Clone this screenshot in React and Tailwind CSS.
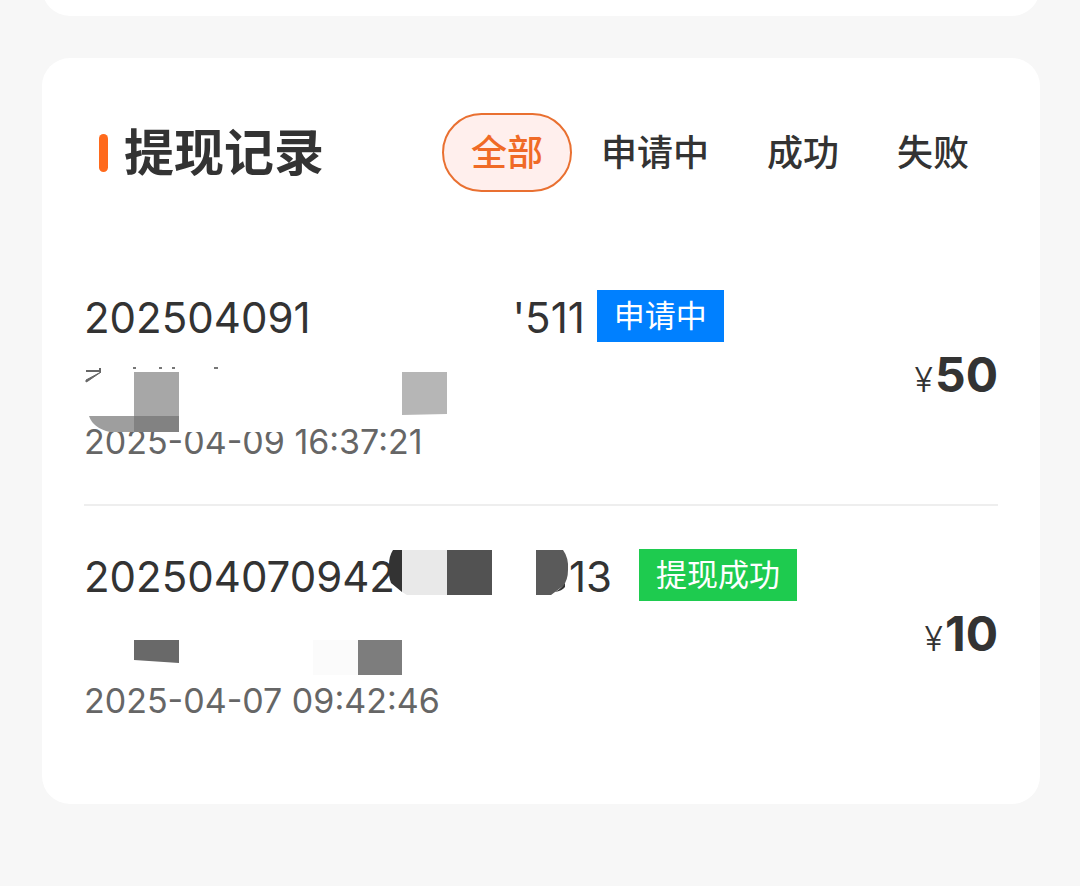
import { useState } from "react";

const TABS = ["全部", "申请中", "成功", "失败"];

const RECORDS = [
  {
    head: "202504091",
    tail: "'511",
    gapClass: "w-[202px]",
    badgeGap: "ml-[12px]",
    status: "申请中",
    badge: "bg-[#0080ff]",
    time: "2025-04-09 16:37:21",
    amount: "50",
    mask: (
      <svg className="absolute left-0 top-0 h-[180px] w-[380px]" viewBox="0 0 380 180" aria-hidden="true">
        <path d="M28 138H205V142H28Z" fill="#fff" />
        <path d="M2 81H17M16 78V82" stroke="#666" strokeWidth="2" fill="none" />
        <path d="M2 90L17 82L4 91L2 92Z" fill="#666" stroke="#666" />
        <path d="M49 78h3M75 78h3M88 78h3M130 78h4" stroke="#777" strokeWidth="2" />
        <path d="M50 82H95V127H50Z" fill="#a7a7a7" />
        <path d="M5 126H50V142H26Q9 138 5 126Z" fill="#9e9e9e" />
        <path d="M50 126H95V142H50Z" fill="#828282" />
        <path d="M318 82H363V124L318 125Z" fill="#b6b6b6" />
      </svg>
    ),
  },
  {
    head: "202504070942",
    tail: "13",
    gapClass: "w-[174px]",
    badgeGap: "ml-[27px]",
    status: "提现成功",
    badge: "bg-[#1ecb4f]",
    time: "2025-04-07 09:42:46",
    amount: "10",
    mask: (
      <svg className="absolute left-0 top-0 h-[180px] w-[500px]" viewBox="0 0 500 180" aria-hidden="true">
        <path d="M309 1H318V43L307 34Q304 26 305 16Q305 7 309 1Z" fill="#333" />
        <path d="M318 1H363V46H323L318 43Z" fill="#e9e9e9" />
        <path d="M363 1H408V46H363Z" fill="#525252" />
        <path d="M452 1H479Q485 9 484 21Q484 31 479 37L467 46H452Z" fill="#5a5a5a" />
        <path d="M471 43Q477 40 481 34V38Q478 42 471 43Z" fill="#333" />
        <path d="M50 91H95V114L50 111Z" fill="#696969" />
        <path d="M229 91H274V126H229Z" fill="#fbfbfb" />
        <path d="M274 91H318V126H274Z" fill="#7d7d7d" />
      </svg>
    ),
  },
];

function Record({ record }) {
  return (
    <li className="flex items-center justify-between border-b-2 border-[#eeeeee] pb-[37px] pt-[43px] last:border-b-0">
      <div className="relative">
        <div className="flex h-[52px] items-center text-[42px] leading-[52px] text-[#333]">
          <span className="pt-[4px]">{record.head}</span>
          <span className={record.gapClass} />
          <span className="pt-[4px]">{record.tail}</span>
          <span
            className={`${record.badgeGap} ${record.badge} px-[17px] text-[31px] leading-[52px] text-white`}
          >
            {record.status}
          </span>
        </div>
        <div className="h-[75px]" />
        <time className="block text-[34px] leading-[50px] text-[#666]">{record.time}</time>
        {record.mask}
      </div>
      <p className="flex items-baseline gap-[2px] pb-[8px] text-[#333]">
        <span className="text-[34px] font-light">¥</span>
        <strong className="text-[48px] font-bold leading-[60px]">{record.amount}</strong>
      </p>
    </li>
  );
}

export default function App() {
  const [active, setActive] = useState(0);
  return (
    <div className="flow-root min-h-screen bg-[#f7f7f7] pl-[42px] pr-[40px] font-['Inter','Noto_Sans_CJK_SC',sans-serif]">
      <div className="-mt-[40px] h-[56px] rounded-b-[28px] bg-white" />
      <main className="mt-[42px] rounded-[28px] bg-white px-[42px] pb-[41px] pt-[55px]">
        <header className="flex items-center justify-between">
          <h1 className="flex items-center gap-[16px] pl-[15px] text-[50px] font-bold leading-[60px] text-[#333]">
            <span className="h-[38px] w-[9px] rounded-full bg-[#ff6a1c]" />
            提现记录
          </h1>
          <nav className="flex">
            {TABS.map((tab, i) => (
              <button
                key={tab}
                type="button"
                aria-pressed={active === i}
                onClick={() => setActive(i)}
                className={`h-[79px] rounded-full border-2 px-[27px] text-[36px] font-medium ${
                  active === i
                    ? "border-[#e97031] bg-[#ffefed] text-[#f06a26]"
                    : "border-transparent text-[#333]"
                }`}
              >
                {tab}
              </button>
            ))}
          </nav>
        </header>
        <ul className="pt-[55px]">
          {RECORDS.map((record) => (
            <Record key={record.time} record={record} />
          ))}
        </ul>
      </main>
    </div>
  );
}
